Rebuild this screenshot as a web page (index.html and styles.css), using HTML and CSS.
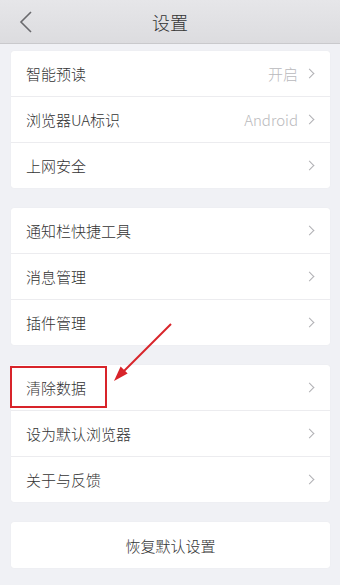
FILE: index.html
```html
<!DOCTYPE html>
<html lang="zh-CN">
<head>
<meta charset="utf-8">
<title>设置</title>
<link rel="stylesheet" href="styles.css">
</head>
<body>
<header class="topbar">
  <svg class="back" width="14" height="22" viewBox="0 0 14 22"><path d="M12 1 L2 11 L12 21" fill="none" stroke="#6a6a6e" stroke-width="1.6"/></svg>
  <h1 class="title">设置</h1>
</header>
<main class="content">
  <section class="card">
    <div class="row"><span class="label">智能预读</span><span class="value">开启</span><span class="chev"></span></div>
    <div class="row"><span class="label">浏览器UA标识</span><span class="value">Android</span><span class="chev"></span></div>
    <div class="row"><span class="label">上网安全</span><span class="chev"></span></div>
  </section>
  <section class="card">
    <div class="row"><span class="label">通知栏快捷工具</span><span class="chev"></span></div>
    <div class="row"><span class="label">消息管理</span><span class="chev"></span></div>
    <div class="row"><span class="label">插件管理</span><span class="chev"></span></div>
  </section>
  <section class="card">
    <div class="row"><span class="label">清除数据</span><span class="chev"></span></div>
    <div class="row"><span class="label">设为默认浏览器</span><span class="chev"></span></div>
    <div class="row"><span class="label">关于与反馈</span><span class="chev"></span></div>
  </section>
  <section class="card">
    <div class="row center"><span class="label">恢复默认设置</span></div>
  </section>
</main>
<div class="highlight"></div>
<svg class="arrow" width="340" height="585" viewBox="0 0 340 585">
  <line x1="171" y1="324" x2="123" y2="372" stroke="#d8242a" stroke-width="2"/>
  <polygon points="114,381 127.6,373.4 120.6,366.4" fill="#d8242a"/>
</svg>
</body>
</html>
```
FILE: styles.css
```css
html, body {
  margin: 0;
  padding: 0;
}
body {
  width: 340px;
  height: 585px;
  overflow: hidden;
  background: #f0f1f5;
  font-family: "Noto Sans CJK SC", "Noto Sans", sans-serif;
  font-weight: 300;
  color: #333;
  position: relative;
}
.topbar {
  height: 43px;
  background: linear-gradient(#e6e6e9, #dcdcdf);
  border-bottom: 1px solid #c9c9cc;
  display: flex;
  align-items: center;
  justify-content: center;
  position: relative;
}
.back {
  position: absolute;
  left: 19px;
  top: 11px;
}
.title {
  margin: 0;
  font-size: 18px;
  font-weight: 300;
  color: #333;
  line-height: 1;
}
.content {
  padding: 7px 10px 0 11px;
  display: flex;
  flex-direction: column;
  gap: 20px;
}
.card {
  background: #fff;
  border-radius: 3px;
  box-shadow: 0 0 1px rgba(0,0,0,0.08);
}
.row {
  height: 45px;
  display: flex;
  align-items: center;
  padding: 0 15px 0 15px;
  border-top: 1px solid #ececef;
}
.row:first-child {
  border-top: none;
}
.row.center {
  justify-content: center;
  height: 46px;
}
.label {
  font-size: 15px;
  color: #333;
  flex: 1;
}
.center .label {
  flex: none;
}
.value {
  font-size: 15px;
  color: #b9b9bc;
  margin-right: 8px;
}
.chev {
  width: 6px;
  height: 6px;
  border-top: 1.5px solid #b0b0b4;
  border-right: 1.5px solid #b0b0b4;
  transform: rotate(45deg);
  margin-right: 2px;
}
.highlight {
  position: absolute;
  left: 10px;
  top: 366px;
  width: 93px;
  height: 38px;
  border: 2.5px solid #d8242a;
}
.arrow {
  position: absolute;
  left: 0;
  top: 0;
  pointer-events: none;
}
```
